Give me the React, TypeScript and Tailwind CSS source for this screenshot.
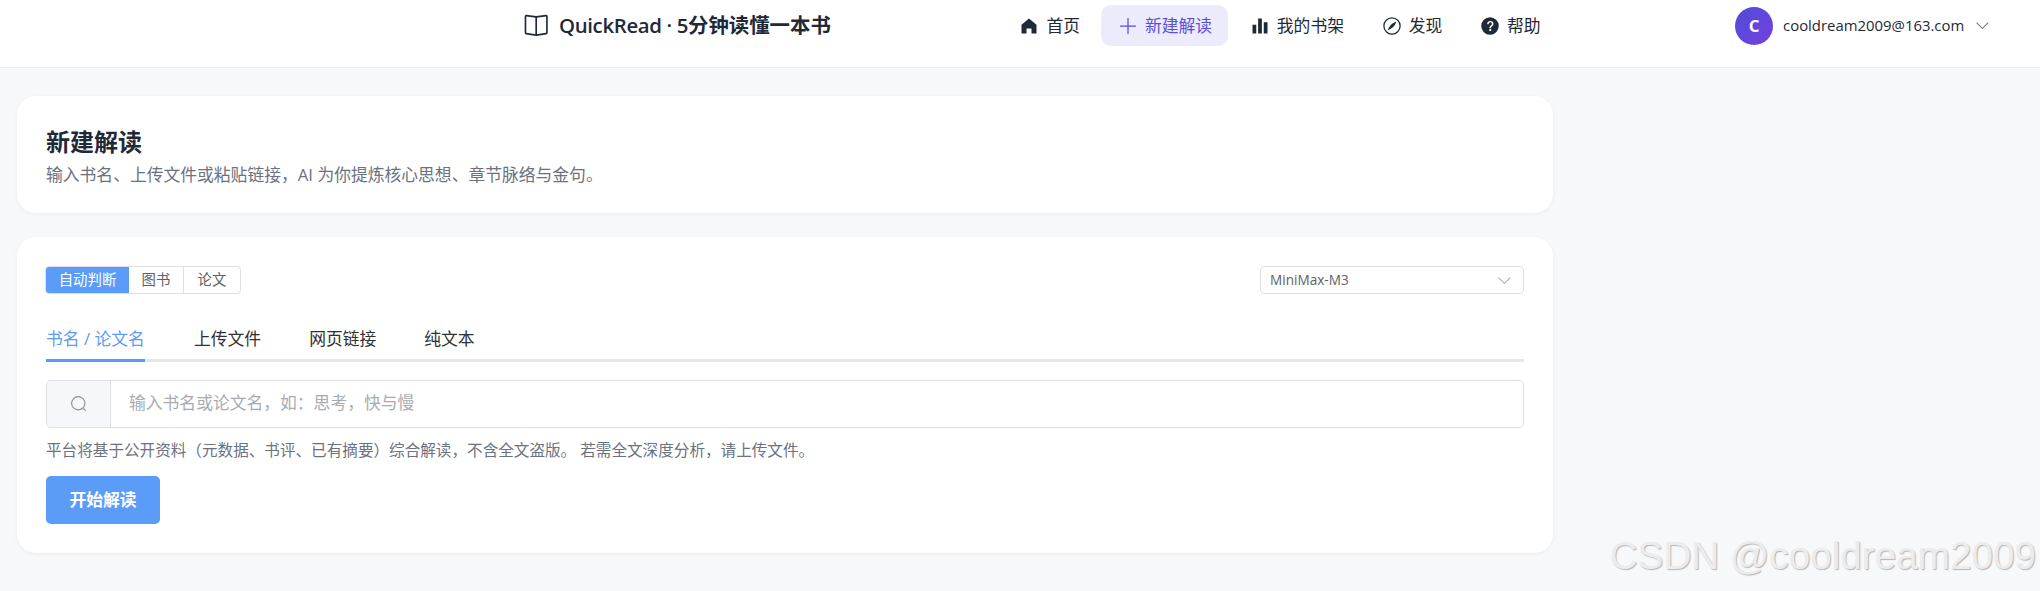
import React from "react";

const Ep = ({ d, className }: { d: string | string[]; className?: string }) => (
  <svg viewBox="0 0 1024 1024" fill="currentColor" className={className}>
    {(Array.isArray(d) ? d : [d]).map((p, i) => (
      <path key={i} d={p} />
    ))}
  </svg>
);

const icons = {
  reading: [
    "m512 863.36 384-54.848v-638.72L525.568 222.72a96 96 0 0 1-27.136 0L128 169.792v638.72zM137.024 106.432l370.432 52.928a32 32 0 0 0 9.088 0l370.432-52.928A64 64 0 0 1 960 169.792v638.72a64 64 0 0 1-54.976 63.36l-388.48 55.488a32 32 0 0 1-9.088 0l-388.48-55.488A64 64 0 0 1 64 808.512v-638.72a64 64 0 0 1 73.024-63.36z",
    "M480 192h64v704h-64z",
  ],
  home: "M512 128 128 447.936V896h255.936V640H640v256h255.936V447.936z",
  plus: "M480 480V128a32 32 0 0 1 64 0v352h352a32 32 0 1 1 0 64H544v352a32 32 0 1 1-64 0V544H128a32 32 0 0 1 0-64z",
  hist: "M416 896V128h192v768zm-288 0V448h192v448zm576 0V320h192v576z",
  compass: [
    "M512 960a448 448 0 1 1 0-896 448 448 0 0 1 0 896m0-64a384 384 0 1 0 0-768 384 384 0 0 0 0 768",
    "M725.888 315.008C676.48 428.672 624 513.28 568.576 568.64c-55.424 55.424-139.968 107.904-253.568 157.312a12.8 12.8 0 0 1-16.896-16.832c49.536-113.728 102.016-198.272 157.312-253.632 55.36-55.296 139.904-107.776 253.632-157.312a12.8 12.8 0 0 1 16.832 16.832",
  ],
  help: "M512 64a448 448 0 1 1 0 896 448 448 0 0 1 0-896m23.744 191.488c-52.096 0-92.928 14.784-123.2 44.352-30.976 29.568-45.76 70.4-45.76 122.496h80.256c0-29.568 5.632-52.8 17.6-68.992 13.376-19.712 35.2-28.864 66.176-28.864 23.936 0 42.944 6.336 56.32 19.712 12.672 13.376 19.712 31.68 19.712 54.912 0 17.6-6.336 34.496-19.008 49.984l-8.448 9.856c-45.76 40.832-73.216 70.4-82.368 89.408-9.856 19.008-14.08 42.24-14.08 68.992v9.856h80.96v-9.856c0-16.896 3.52-31.68 10.56-45.76 6.336-12.672 15.488-24.64 28.16-35.2 33.792-29.568 54.208-48.576 60.544-55.616 16.896-22.528 26.048-51.392 26.048-86.592 0-42.944-14.08-76.736-42.24-101.376-28.16-25.344-65.472-37.312-111.232-37.312zm-12.672 406.208a54.272 54.272 0 0 0-38.72 14.784 49.408 49.408 0 0 0-15.488 38.016c0 15.488 4.928 28.16 15.488 38.016A54.848 54.848 0 0 0 523.072 768c15.488 0 28.16-4.928 38.72-14.784a51.52 51.52 0 0 0 16.192-38.72 51.968 51.968 0 0 0-15.488-38.016 55.936 55.936 0 0 0-39.424-14.784z",
  down: "M831.872 340.864 512 652.672 192.128 340.864a30.592 30.592 0 0 0-42.752 0 29.12 29.12 0 0 0 0 41.6L489.664 714.24a32 32 0 0 0 44.672 0l340.288-331.712a29.12 29.12 0 0 0 0-41.728 30.592 30.592 0 0 0-42.752 0z",
  search: "m795.904 750.72 124.992 124.928a32 32 0 0 1-45.248 45.248L750.656 795.904a416 416 0 1 1 45.248-45.248zM480 832a352 352 0 1 0 0-704 352 352 0 0 0 0 704",
};

const NavItem = ({ icon, label, active }: { icon: string | string[]; label: string; active?: boolean }) => (
  <div
    className={`flex h-[41px] items-center gap-[7.2px] rounded-[10px] px-[16.4px] text-[16.8px] ${
      active ? "bg-[#ecebfb] text-[#5b4ddb]" : "text-[#1f2937]"
    }`}
  >
    <Ep d={icon} className="h-[20px] w-[20px]" />
    <span>{label}</span>
  </div>
);

export default function App() {
  return (
    <div className="relative h-[591px] w-[2040px] overflow-hidden bg-[#f7f8fa] font-['Open_Sans','Noto_Sans_CJK_SC',sans-serif]">
      <header className="flex h-[68px] items-start border-b border-[#ebecef] bg-white pl-[523px] pt-[5px]">
        <div className="flex h-[41px] w-[480px] items-center gap-[9.6px] text-[20.4px] text-[#1f2937]">
          <Ep d={icons.reading} className="h-[26.4px] w-[26.4px]" />
          <span className="font-semibold">
            <span className="tracking-[-0.35px]">QuickRead · 5</span>
            <span className="font-bold">分钟读懂一本书</span>
          </span>
        </div>
        <nav className="flex items-center gap-[4.8px]">
          <NavItem icon={icons.home} label="首页" />
          <NavItem icon={icons.plus} label="新建解读" active />
          <NavItem icon={icons.hist} label="我的书架" />
          <NavItem icon={icons.compass} label="发现" />
          <NavItem icon={icons.help} label="帮助" />
        </nav>
        <div className="ml-[178px] flex h-[41px] items-center">
          <div className="flex h-[38px] w-[38px] items-center justify-center rounded-full bg-gradient-to-br from-[#4f4ad8] to-[#7440de] text-[16.8px] font-bold text-white">
            C
          </div>
          <span className="ml-[10px] text-[14.9px] text-[#1f2937]">cooldream2009@163.com</span>
          <Ep d={icons.down} className="ml-[10px] h-[16.8px] w-[16.8px] text-[#6b7280]" />
        </div>
      </header>

      <main className="flex w-[1570px] flex-col gap-[24px] pl-[17px] pr-[17px] pt-[28px]">
        <section className="rounded-[19px] bg-white px-[29px] pb-[24px] pt-[29px] shadow-[0_1px_4px_rgba(15,23,42,0.05)]">
          <h1 className="text-[24px] font-bold leading-[34px] text-[#1f2937]">新建解读</h1>
          <p className="mt-[2px] text-[16.8px] leading-[28px] text-[#6b7280]">
            输入书名、上传文件或粘贴链接，AI 为你提炼核心思想、章节脉络与金句。
          </p>
        </section>

        <section className="rounded-[19px] bg-white p-[29px] shadow-[0_1px_4px_rgba(15,23,42,0.05)]">
          <div className="flex h-[28px] items-center justify-between">
            <div className="-ml-px flex h-[28px] overflow-hidden rounded-[4px] border border-[#dcdfe6] text-[14.4px] text-[#606266]">
              <div className="flex w-[83px] items-center justify-center bg-[#5a9cf8] text-white">自动判断</div>
              <div className="flex w-[55px] items-center justify-center border-r border-[#dcdfe6]">图书</div>
              <div className="flex w-[56px] items-center justify-center">论文</div>
            </div>
            <div className="flex h-[28px] w-[264px] items-center justify-between rounded-[5px] border border-[#dcdfe6] pl-[9px] pr-[10px] text-[13.6px] text-[#606266]">
              <span>MiniMax-M3</span>
              <Ep d={icons.down} className="h-[16.8px] w-[16.8px] text-[#a8abb2]" />
            </div>
          </div>

          <div className="mt-[20px] flex h-[48px] items-stretch gap-[48px] border-b-[3px] border-[#e4e7ed] text-[16.8px] text-[#303133]">
            <div className="-mb-[3px] mr-[1px] flex w-[99px] items-center whitespace-nowrap border-b-[3px] border-[#5a9cf8] pt-[4px] text-[#5a9cf8]">
              书名 / 论文名
            </div>
            <div className="flex items-center pt-[4px]">上传文件</div>
            <div className="flex items-center pt-[4px]">网页链接</div>
            <div className="flex items-center pt-[4px]">纯文本</div>
          </div>

          <div className="mt-[18px] flex h-[48px] overflow-hidden rounded-[5px] border border-[#dcdfe6]">
            <div className="flex w-[64px] items-center justify-center border-r border-[#dcdfe6] bg-[#f5f7fa] pb-[1px]">
              <Ep d={icons.search} className="h-[17.6px] w-[17.6px] text-[#909399]" />
            </div>
            <div className="flex flex-1 items-center pb-[2px] pl-[18px] text-[16.8px] text-[#a8abb2]">
              输入书名或论文名，如：思考，快与慢
            </div>
          </div>

          <p className="mt-[10px] text-[15.6px] leading-[24px] text-[#6b7280]">
            平台将基于公开资料（元数据、书评、已有摘要）综合解读，不含全文盗版。 若需全文深度分析，请上传文件。
          </p>

          <div className="mt-[14px] flex h-[47.5px] w-[114px] items-center justify-center rounded-[5px] bg-[#5a9cf8] pb-[1px] text-[16.8px] font-semibold text-white">
            开始解读
          </div>
        </section>
      </main>

      <div className="absolute right-[4px] top-[533px] font-['Liberation_Sans',sans-serif] text-[38.7px] leading-[46px] text-[#ececee] [text-shadow:1px_1px_1px_#b5b5b5]">
        CSDN @cooldream2009
      </div>
    </div>
  );
}
